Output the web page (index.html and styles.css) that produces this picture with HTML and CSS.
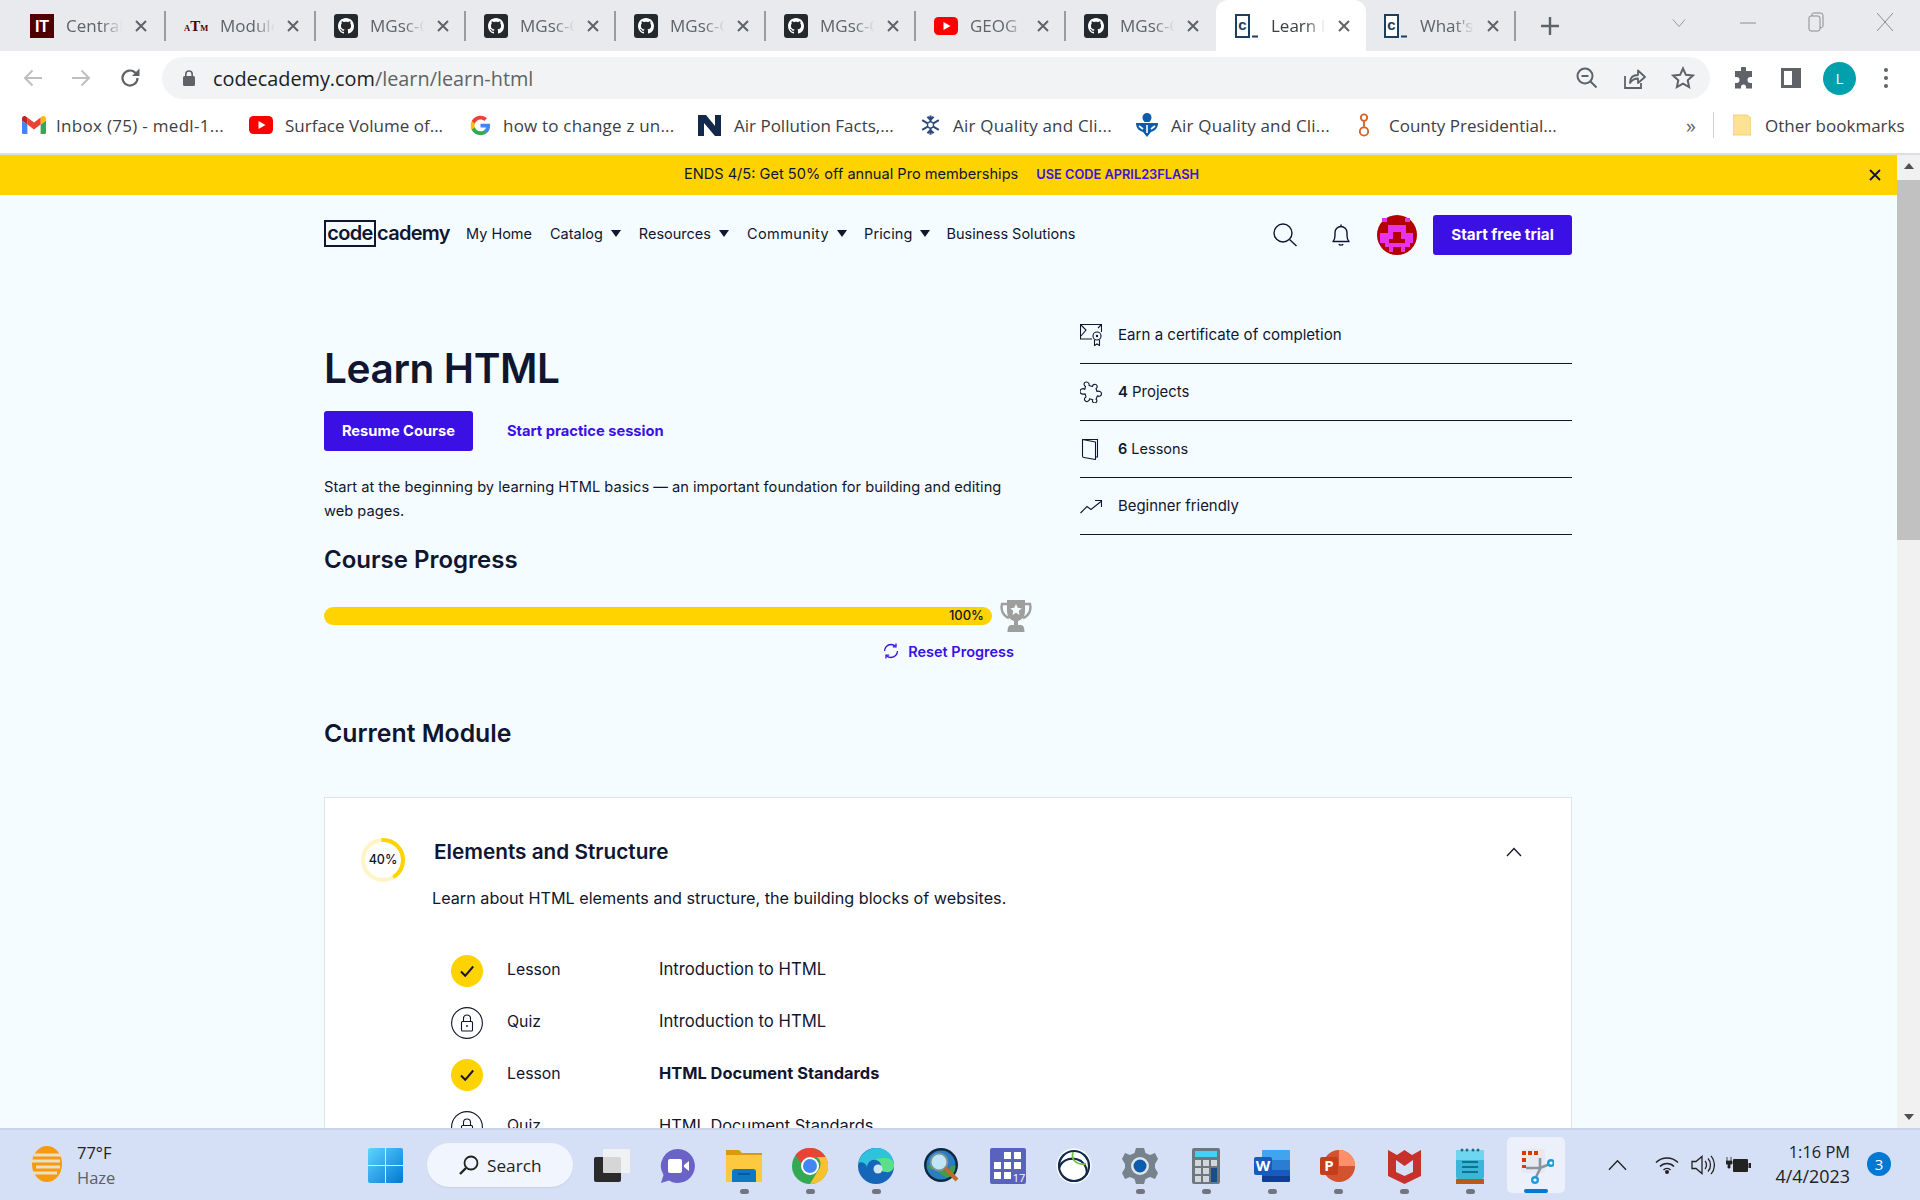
FILE: index.html
```html
<!DOCTYPE html>
<html lang="en">
<head>
<meta charset="utf-8">
<title>Learn HTML | Codecademy</title>
<link rel="stylesheet" href="styles.css">
</head>
<body>
<svg class="defs" width="0" height="0" aria-hidden="true">
  <symbol id="gh" viewBox="0 0 24 24"><rect width="24" height="24" rx="3" fill="#24292e"/><path transform="translate(4 4)" fill="#fff" d="M8 0C3.58 0 0 3.58 0 8c0 3.54 2.29 6.53 5.47 7.59.4.07.55-.17.55-.38 0-.19-.01-.82-.01-1.49-2.01.37-2.53-.49-2.69-.94-.09-.23-.48-.94-.82-1.13-.28-.15-.68-.52-.01-.53.63-.01 1.08.58 1.23.82.72 1.21 1.87.87 2.33.66.07-.52.28-.87.51-1.07-1.78-.2-3.64-.89-3.64-3.95 0-.87.31-1.59.82-2.15-.08-.2-.36-1.02.08-2.12 0 0 .67-.21 2.2.82.64-.18 1.32-.27 2-.27s1.36.09 2 .27c1.53-1.04 2.2-.82 2.2-.82.44 1.1.16 1.92.08 2.12.51.56.82 1.27.82 2.15 0 3.07-1.87 3.75-3.65 3.95.29.25.54.73.54 1.48 0 1.07-.01 1.93-.01 2.2 0 .21.15.46.55.38A8.013 8.013 0 0016 8c0-4.42-3.58-8-8-8z"/></symbol>
  <symbol id="yt" viewBox="0 0 24 24"><rect y="3" width="24" height="18" rx="4.5" fill="#f00"/><path d="M9.5 8v8l7-4z" fill="#fff"/></symbol>
  <symbol id="x" viewBox="0 0 14 14"><path d="M2 2l10 10M12 2L2 12" stroke="#5f6368" stroke-width="2" fill="none"/></symbol>
  <symbol id="check" viewBox="0 0 32 32"><circle cx="16" cy="16" r="16" fill="#ffd300"/><path d="M10 16.5l4.2 4.3 8-9.3" fill="none" stroke="#10162f" stroke-width="2"/></symbol>
  <symbol id="lock" viewBox="0 0 32 32"><circle cx="16" cy="16" r="15.4" fill="#fff" stroke="#10162f" stroke-width="1.1"/><rect x="10.5" y="14.5" width="11" height="9.5" rx="1" fill="none" stroke="#10162f" stroke-width="1.1"/><path d="M12.5 14.5v-3a3.5 3.5 0 017 0v3" fill="none" stroke="#10162f" stroke-width="1.1"/><circle cx="16" cy="19" r=".9" fill="#10162f"/></symbol>
</svg>

<header class="tabstrip">
  <div class="tab tab-first">
    <svg class="fav" viewBox="0 0 24 24"><rect width="24" height="24" fill="#500000"/><text x="12" y="18" text-anchor="middle" class="fav-it">IT</text></svg>
    <span class="tab-title">Central</span><svg class="tab-x"><use href="#x"/></svg>
  </div>
  <div class="tab">
    <svg class="fav" viewBox="0 0 24 24"><text x="0" y="17" class="fav-am">A<tspan class="fav-t">T</tspan><tspan>M</tspan></text></svg>
    <span class="tab-title">Module</span><svg class="tab-x"><use href="#x"/></svg>
  </div>
  <div class="tab"><svg class="fav"><use href="#gh"/></svg><span class="tab-title">MGsc-G</span><svg class="tab-x"><use href="#x"/></svg></div>
  <div class="tab"><svg class="fav"><use href="#gh"/></svg><span class="tab-title">MGsc-G</span><svg class="tab-x"><use href="#x"/></svg></div>
  <div class="tab"><svg class="fav"><use href="#gh"/></svg><span class="tab-title">MGsc-G</span><svg class="tab-x"><use href="#x"/></svg></div>
  <div class="tab"><svg class="fav"><use href="#gh"/></svg><span class="tab-title">MGsc-G</span><svg class="tab-x"><use href="#x"/></svg></div>
  <div class="tab"><svg class="fav"><use href="#yt"/></svg><span class="tab-title">GEOG 3</span><svg class="tab-x"><use href="#x"/></svg></div>
  <div class="tab tab-before-active"><svg class="fav"><use href="#gh"/></svg><span class="tab-title">MGsc-G</span><svg class="tab-x"><use href="#x"/></svg></div>
  <div class="tab tab-active">
    <svg class="fav" viewBox="0 0 24 24"><rect x="1" y="1" width="13" height="22" fill="#fff" stroke="#1d3f5e" stroke-width="2"/><text x="7.500" y="16" text-anchor="middle" class="fav-c">c</text><rect x="17" y="21.500" width="6" height="2" fill="#1d3f5e"/></svg>
    <span class="tab-title">Learn H</span><svg class="tab-x"><use href="#x"/></svg>
  </div>
  <div class="tab">
    <svg class="fav" viewBox="0 0 24 24"><rect x="1" y="1" width="13" height="22" fill="#fff" stroke="#1d3f5e" stroke-width="2"/><text x="7.500" y="16" text-anchor="middle" class="fav-c">c</text><rect x="17" y="21.500" width="6" height="2" fill="#1d3f5e"/></svg>
    <span class="tab-title">What's</span><svg class="tab-x"><use href="#x"/></svg>
  </div>
  <svg class="tab-plus" viewBox="0 0 20 20"><path d="M10 1v18M1 10h18" stroke="#5f6368" stroke-width="2.4"/></svg>
  <div class="winctl">
    <svg class="win-chev" viewBox="0 0 16 10"><path d="M1 1l7 8 7-8" fill="none" stroke="#8a8d91" stroke-width="1"/></svg>
    <svg class="win-min" viewBox="0 0 16 16"><path d="M0 8h16" stroke="#8a8d91" stroke-width="1"/></svg>
    <svg class="win-max" viewBox="0 0 16 20"><rect x="1" y="4" width="11" height="15" rx="2" fill="none" stroke="#8a8d91"/><path d="M4 4V2.5A1.5 1.5 0 015.500 1h7A2.500 2.500 0 0115 3.500V14a2 2 0 01-3 1.500" fill="none" stroke="#8a8d91"/></svg>
    <svg class="win-x" viewBox="0 0 16 20"><path d="M0 1l16 18M16 1L0 19" stroke="#8a8d91" stroke-width="1"/></svg>
  </div>
</header>

<div class="toolbar">
  <svg class="tool tool-back" viewBox="0 0 20 20"><path d="M19 10H2M9.500 2.500L2 10l7.500 7.500" fill="none" stroke="#bcbfc3" stroke-width="2"/></svg>
  <svg class="tool tool-fwd" viewBox="0 0 20 20"><path d="M1 10h17M10.500 2.500L18 10l-7.500 7.500" fill="none" stroke="#bcbfc3" stroke-width="2"/></svg>
  <svg class="tool tool-reload" viewBox="0 0 22 22"><path d="M18.500 11a7.500 7.500 0 11-2.300-5.400L19 8" fill="none" stroke="#5f6368" stroke-width="2.200"/><path d="M20.500 1.500V9h-7.500z" fill="#5f6368"/></svg>
  <div class="omnibox">
    <svg class="lock" viewBox="0 0 12 16"><rect y="6" width="12" height="10" rx="1.500" fill="#5f6368"/><path d="M2.800 6.500V4.200a3.200 3.200 0 016.400 0v2.300" fill="none" stroke="#5f6368" stroke-width="1.600"/></svg>
    <span class="url"><span class="url-host">codecademy.com</span>/learn/learn-html</span>
    <svg class="omni-zoom" viewBox="0 0 22 22"><circle cx="9" cy="9" r="7.500" fill="none" stroke="#5f6368" stroke-width="2"/><path d="M5.500 9h7M14.500 14.500l6 6" stroke="#5f6368" stroke-width="2"/></svg>
    <svg class="omni-share" viewBox="0 0 22 22"><path d="M1 9v12h16v-5" fill="none" stroke="#5f6368" stroke-width="1.800"/><path d="M6 16c0-5 3-8 8-8V3.500l7 6.500-7 6v-4.500c-4 0-6 1.500-8 4.500z" fill="none" stroke="#5f6368" stroke-width="1.800" stroke-linejoin="round"/></svg>
    <svg class="omni-star" viewBox="0 0 24 24"><path d="M12 2.500l2.900 6.300 6.900.8-5.100 4.700 1.400 6.800-6.100-3.400-6.100 3.400 1.400-6.800-5.100-4.700 6.900-.8z" fill="none" stroke="#5f6368" stroke-width="2"/></svg>
  </div>
  <svg class="tool tool-ext" viewBox="0 0 22 22"><path d="M8 1.500a2.500 2.500 0 015 0V4h6v6h-1.500a3 3 0 000 6H19v5.500h-6V20a2.500 2.500 0 00-5 0v1.500H2V16h1.500a3 3 0 000-6H2V4h6z" fill="#5f6368"/></svg>
  <svg class="tool tool-side" viewBox="0 0 20 20"><rect x="1.500" y="1.500" width="17" height="17" fill="none" stroke="#5f6368" stroke-width="3"/><rect x="11" y="1" width="8" height="18" fill="#5f6368"/></svg>
  <div class="profile">L</div>
  <div class="kebab"><i></i><i></i><i></i></div>
</div>

<nav class="bookmarks">
  <div class="bm bm-1"><svg class="bm-ico" viewBox="0 0 24 18"><path d="M1.600 18h3.800V8.500L0 4.500v11.900c0 .9.700 1.600 1.600 1.600z" fill="#4285f4"/><path d="M18.600 18h3.800c.9 0 1.600-.7 1.600-1.600V4.500l-5.400 4z" fill="#34a853"/><path d="M18.600 1.500v7L24 4.500V2.400C24 .4 21.700-.7 20.200.5z" fill="#fbbc04"/><path d="M5.400 8.500v-7L12 6.500l6.600-5v7L12 13.500z" fill="#ea4335"/><path d="M0 2.400v2.100l5.400 4v-7L3.800.5C2.300-.7 0 .4 0 2.400z" fill="#c5221f"/></svg><span>Inbox (75) - medl-1...</span></div>
  <div class="bm bm-2"><svg class="bm-ico"><use href="#yt"/></svg><span>Surface Volume of...</span></div>
  <div class="bm bm-3"><svg class="bm-ico bm-ico-g" viewBox="0 0 24 24"><path d="M23 12.300c0-.9-.1-1.600-.2-2.300H12v4.300h6.200c-.3 1.400-1 2.500-2.200 3.300v2.800h3.600c2.100-2 3.400-4.800 3.400-8.100z" fill="#4285f4"/><path d="M12 23c3 0 5.500-1 7.400-2.700L16 17.600c-1 .7-2.300 1.100-4 1.100-3 0-5.500-2-6.400-4.700H1.900v2.900C3.800 20.600 7.600 23 12 23z" fill="#34a853"/><path d="M5.600 14c-.2-.7-.4-1.400-.4-2.100s.1-1.400.4-2.100V7H1.900C1.200 8.400.8 10.100.8 11.900s.4 3.400 1.100 5z" fill="#fbbc04"/><path d="M12 5.200c1.600 0 3.100.6 4.200 1.700l3.200-3.200C17.500 1.900 15 .8 12 .8 7.600.8 3.800 3.300 1.900 7l3.700 2.800C6.500 7.200 9 5.200 12 5.200z" fill="#ea4335"/></svg><span>how to change z un...</span></div>
  <div class="bm bm-4"><svg class="bm-ico" viewBox="0 0 24 24"><path d="M0 2h8l9 11V2h6v21h-6L6 10v13H0z" fill="#13294b"/></svg><span>Air Pollution Facts,...</span></div>
  <div class="bm bm-5"><svg class="bm-ico bm-ico-snow" viewBox="0 0 24 24"><g stroke="#2c4a7c" stroke-width="2.400" fill="none"><path d="M12 1v22M2.500 6.500l19 11M21.500 6.500l-19 11M8.500 2.500L12 6l3.500-3.500M8.500 21.500L12 18l3.500 3.500"/></g><circle cx="12" cy="12" r="3.500" fill="#fff" stroke="#2c4a7c" stroke-width="1.500"/></svg><span>Air Quality and Cli...</span></div>
  <div class="bm bm-6"><svg class="bm-ico" viewBox="0 0 24 24"><path d="M12 0a4.500 4.500 0 014.500 4.500c0 2-1.500 3.500-2 4.500H9.500c-.5-1-2-2.500-2-4.500A4.500 4.500 0 0112 0z" fill="#0b5cab"/><path d="M1 10h22c0 6-4 8-7 9l-4 5-4-5c-3-1-7-3-7-9z" fill="#0b5cab"/><path d="M4 13l4 3M20 13l-4 3M12 12v8" stroke="#fff" stroke-width="1.600"/></svg><span>Air Quality and Cli...</span></div>
  <div class="bm bm-7"><svg class="bm-ico bm-ico-narrow" viewBox="0 0 12 26"><g fill="none" stroke="#d2622a" stroke-width="2"><circle cx="6" cy="5" r="3.500"/><circle cx="6" cy="20" r="4.500"/><path d="M6 9v6"/></g></svg><span>County Presidential...</span></div>
  <span class="bm-more">»</span>
  <div class="bm-sep"></div>
  <div class="bm bm-other"><svg class="bm-folder" viewBox="0 0 18 22"><path d="M0 1h14l4 3v17H0z" fill="#fde293" stroke="#f4d272" stroke-width="1"/></svg><span>Other bookmarks</span></div>
</nav>

<div class="viewport">
  <div class="page">
    <div class="banner">
      <p class="banner-text">ENDS 4/5: Get 50% off annual Pro memberships<a class="banner-code">USE CODE APRIL23FLASH</a></p>
      <svg class="banner-x" viewBox="0 0 12 12"><path d="M1 1l10 10M11 1L1 11" stroke="#10162f" stroke-width="1.800"/></svg>
    </div>
    <div class="wrap">
      <div class="nav">
        <div class="logo"><span class="logo-box">code</span><span class="logo-rest">cademy</span></div>
        <ul class="nav-links">
          <li>My Home</li>
          <li>Catalog<i class="caret"></i></li>
          <li>Resources<i class="caret"></i></li>
          <li class="nl-community">Community<i class="caret"></i></li>
          <li class="nl-pricing">Pricing<i class="caret"></i></li>
          <li>Business Solutions</li>
        </ul>
        <svg class="nav-search" viewBox="0 0 24 24"><circle cx="10" cy="10" r="9" fill="none" stroke="#10162f" stroke-width="1.400"/><path d="M16.500 16.500l7 6.500" stroke="#10162f" stroke-width="1.400"/></svg>
        <svg class="nav-bell" viewBox="0 0 18 22"><path d="M1 17.500c1.500-1.500 2-3 2-6V8.500a6 6 0 0112 0v3c0 3 .5 4.500 2 6z" fill="none" stroke="#10162f" stroke-width="1.400" stroke-linejoin="round"/><path d="M7 20c.5 1.500 3.500 1.500 4 0" fill="none" stroke="#10162f" stroke-width="1.400"/><path d="M9 .5v2" stroke="#10162f" stroke-width="1.400"/></svg>
        <svg class="nav-avatar" viewBox="0 0 40 40"><circle cx="20" cy="20" r="20" fill="#b30000"/><path d="M5 3h5v4H5zM28 3h5v4h-5zM11 10h18v8h7v10h-3v4h-5v5H12v-5H8v-4H3V18h8z" fill="#e633ee"/><path d="M16 17h8v7h4v4H12v-4h4zM16 32h8v6h-8z" fill="#b30000"/></svg>
        <a class="btn btn-trial">Start free trial</a>
      </div>
      <div class="hero">
        <section class="hero-main">
          <h1>Learn HTML</h1>
          <div class="cta"><a class="btn btn-resume">Resume Course</a><a class="link-practice">Start practice session</a></div>
          <p class="intro">Start at the beginning by learning HTML basics — an important foundation for building and editing web pages.</p>
          <h2 class="progress-title">Course Progress</h2>
          <div class="progress-row">
            <div class="bar"><span class="bar-label">100%</span></div>
            <svg class="trophy" viewBox="0 0 32 32"><path d="M7 0h18v11c0 6-3.500 9-7 10v4h3c2 0 3.500 2 3.500 7h-17c0-5 1.500-7 3.500-7h3v-4c-3.500-1-7-4-7-10z" fill="#9e9e9e"/><path d="M7 4H2c-1.500 6 1 12 7 14M25 4h5c1.500 6-1 12-7 14" fill="none" stroke="#9e9e9e" stroke-width="2.400"/><path d="M16 4l1.700 3.800 4.100.4-3.100 2.700.9 4-3.600-2.100-3.600 2.100.9-4-3.100-2.700 4.100-.4z" fill="#f5fcff"/></svg>
          </div>
          <a class="reset"><svg class="reset-ico" viewBox="0 0 16 16"><path d="M14.500 8c0 3.500-2.800 6.500-6.500 6.500-1.800 0-3.300-.7-4.500-1.800M1.500 8C1.500 4.500 4.300 1.500 8 1.500c1.800 0 3.300.7 4.500 1.800" fill="none" stroke="#3a10e5" stroke-width="1.300"/><path d="M13 .5v3.300H9.800M3 15.500v-3.300h3.200" fill="none" stroke="#3a10e5" stroke-width="1.300"/></svg>Reset Progress</a>
          <h2 class="module-title">Current Module</h2>
        </section>
        <ul class="facts">
          <li class="fact-cert"><svg class="fact-ico" viewBox="0 0 22 22"><path d="M12 15H.5V.500h21V8" fill="none" stroke="#10162f" stroke-width="1.100"/><path d="M1 1l5 5-5 6M21 1l-3 3" fill="none" stroke="#10162f" stroke-width="1.100"/><circle cx="17" cy="12" r="4" fill="#f5fcff" stroke="#10162f" stroke-width="1.100"/><circle cx="17" cy="12" r="1.200" fill="#10162f"/><path d="M14.500 16v5.500l2.500-1.500 2.500 1.500V16" fill="none" stroke="#10162f" stroke-width="1.100"/></svg><span>Earn a certificate of completion</span></li>
          <li><svg class="fact-ico" viewBox="0 0 22 22"><path d="M5.500 5.500C3 4 4 .8 6.500 1c2 .2 3 2 2.500 3.500l3.500 1c0-2.500 3.500-3 4.500-.8.500 1.300 0 2.300-1 2.800l1 3c2-1 4.500 0 4.500 2.300s-2.500 3.200-4 2l-1.500 3.500c1.500.8 1 3.700-1.200 3.700-2 0-3-2-2-3.300l-3.300-1c.200 2.500-3 3.800-4.500 2-1.200-1.500-.2-3.300 1-3.800l-1-3.200c-2 1-5 .2-5-2.300 0-2.500 3-3.500 4.800-2z" fill="none" stroke="#10162f" stroke-width="1.100" stroke-linejoin="round"/></svg><span><b>4</b> Projects</span></li>
          <li class="fact-lessons"><svg class="fact-ico" viewBox="0 0 22 22"><path d="M2.500 1.500h15v17.500h-2" fill="none" stroke="#10162f" stroke-width="1.100"/><path d="M2.500 1.500l13 2.500v17.500l-11.500-2c-1 0-1.500-.6-1.500-1.500z" fill="none" stroke="#10162f" stroke-width="1.100" stroke-linejoin="round"/></svg><span><b>6</b> Lessons</span></li>
          <li><svg class="fact-ico" viewBox="0 0 22 22"><path d="M.5 18l6.500-6.500 4 3L21 6.500M15 5.500h6.500V12" fill="none" stroke="#10162f" stroke-width="1.100"/></svg><span>Beginner friendly</span></li>
        </ul>
      </div>
      <article class="card">
        <div class="card-head">
          <div class="ring">
            <svg viewBox="0 0 44 44"><circle cx="22" cy="22" r="20" fill="none" stroke="#fff4c4" stroke-width="4"/><circle class="ring-val" cx="22" cy="22" r="20" fill="none" stroke="#ffd300" stroke-width="4" stroke-linecap="round" stroke-dasharray="50 126" transform="rotate(-90 22 22)"/></svg>
            <span>40%</span>
          </div>
          <h3>Elements and Structure</h3>
          <svg class="chev" viewBox="0 0 16 10"><path d="M1 9l7-7.500L15 9" fill="none" stroke="#10162f" stroke-width="1.300"/></svg>
        </div>
        <p class="card-desc">Learn about HTML elements and structure, the building blocks of websites.</p>
        <ul class="items">
          <li><svg class="item-ico"><use href="#check"/></svg><span class="item-type">Lesson</span><span class="item-name">Introduction to HTML</span></li>
          <li><svg class="item-ico"><use href="#lock"/></svg><span class="item-type">Quiz</span><span class="item-name">Introduction to HTML</span></li>
          <li><svg class="item-ico"><use href="#check"/></svg><span class="item-type">Lesson</span><b>HTML Document Standards</b></li>
          <li><svg class="item-ico"><use href="#lock"/></svg><span class="item-type">Quiz</span><span class="item-name item-name-alt">HTML Document Standards</span></li>
        </ul>
      </article>
    </div>
  </div>
  <div class="scrollbar">
    <div class="sb-arrow"><i class="sb-up"></i></div>
    <div class="sb-track"><div class="sb-thumb"></div></div>
    <div class="sb-arrow"><i class="sb-down"></i></div>
  </div>
</div>

<footer class="taskbar">
  <div class="weather">
    <svg class="weather-ico" viewBox="0 0 32 36"><ellipse cx="17" cy="18" rx="15" ry="18" fill="#f79a0d"/><path d="M4 9h28M0 15h30M6 21h24M1 27h26" stroke="#eadfc6" stroke-width="3"/></svg>
    <div class="weather-text"><div class="temp">77°F</div><div class="cond">Haze</div></div>
  </div>
  <div class="tb-item"><svg class="tb-ico" viewBox="0 0 36 36"><defs><linearGradient id="winblue" x1="0" y1="0" x2="1" y2="1"><stop offset="0" stop-color="#5fd4ff"/><stop offset="1" stop-color="#0078d4"/></linearGradient></defs><rect width="35" height="35" rx="2" fill="url(#winblue)"/><path d="M17.500 0v35M0 17.500h35" stroke="#e0ebfa" stroke-width="1"/></svg></div>
  <div class="searchbox"><svg class="search-ico" viewBox="0 0 20 20"><circle cx="12" cy="8" r="6.500" fill="none" stroke="#222" stroke-width="1.800"/><path d="M7 13l-6 6" stroke="#222" stroke-width="2.400"/></svg><span>Search</span></div>
  <div class="tb-item"><svg class="tb-ico" viewBox="0 0 36 36"><rect x="0" y="9" width="27" height="25" rx="2" fill="#2a2a2a"/><rect x="9" y="1" width="27" height="24" rx="1" fill="#f4f4f4" fill-opacity=".85"/></svg></div>
  <div class="tb-item"><svg class="tb-ico" viewBox="0 0 36 36"><path d="M18 1a17 17 0 11-9 31.500L1 35l2.500-8A17 17 0 0118 1z" fill="#6b62c8"/><rect x="8" y="11" width="14" height="14" rx="2" fill="#fff"/><path d="M24 17l5-4v10l-5-4z" fill="#fff"/></svg></div>
  <div class="tb-item run"><svg class="tb-ico" viewBox="0 0 36 36"><path d="M0 2h13l3 3h20v29H0z" fill="#fcc93f"/><path d="M0 2h13l3 3h20v2H0z" fill="#d99a0c"/><path d="M6 24c0-2 1-3 3-3h18c2 0 3 1 3 3v10H6z" fill="#0c78c8"/><path d="M12 26h12" stroke="#084f88" stroke-width="1.500"/></svg></div>
  <div class="tb-item run"><svg class="tb-ico" viewBox="0 0 36 36"><circle cx="18" cy="18" r="18" fill="#34a853"/><path d="M18 0a18 18 0 0115.600 9H18a9 9 0 00-8.600 6.300L3.500 7A18 18 0 0118 0z" fill="#ea4335"/><path d="M33.600 9A18 18 0 0118 36l8-13.500A9 9 0 0025 9z" fill="#fbc02d"/><circle cx="18" cy="18" r="9" fill="#fff"/><circle cx="18" cy="18" r="7" fill="#4285f4"/></svg></div>
  <div class="tb-item run"><svg class="tb-ico" viewBox="0 0 36 36"><circle cx="18" cy="18" r="18" fill="#1565b8"/><path d="M0 16C2 6 10 0 19 0c9 0 17 7 17 17 0 4-3 8-8 7-5-.5-6-3-6-3 2-3 1-8-4-9-6-1-9 4-9 8 0-4-6-8-9-4z" fill="#2fc2dd"/><path d="M36 17c0 4-3 8-8 7-4-.5-6-2-6-3 3-4 0-10-6-9 10-4 20-2 20 5z" fill="#5be08a"/><circle cx="20" cy="21" r="4.500" fill="#cfe6f2"/></svg></div>
  <div class="tb-item"><svg class="tb-ico" viewBox="0 0 36 36"><circle cx="17" cy="17" r="17" fill="#0f2a3f"/><circle cx="17" cy="17" r="14.500" fill="#2a7dc0"/><path d="M5 20c6-4 10 2 16 6s8-6 8-8" fill="none" stroke="#3e9e4a" stroke-width="5"/><circle cx="15" cy="14" r="8.500" fill="#bfe6f7" stroke="#7d8f98" stroke-width="2"/><path d="M21 20l12 12" stroke="#c06a2b" stroke-width="4"/></svg></div>
  <div class="tb-item"><svg class="tb-ico" viewBox="0 0 36 36"><rect width="36" height="36" rx="2" fill="#5a62bf"/><g fill="#fff"><rect x="14" y="4" width="7" height="7"/><rect x="24" y="4" width="7" height="7"/><rect x="4" y="14" width="7" height="7"/><rect x="14" y="14" width="7" height="7"/><rect x="24" y="14" width="7" height="7"/><rect x="4" y="24" width="7" height="7"/><rect x="14" y="24" width="7" height="7"/></g><text x="29" y="34" text-anchor="middle" class="cal-17">17</text></svg></div>
  <div class="tb-item"><svg class="tb-ico" viewBox="0 0 36 36"><circle cx="18" cy="18" r="17.500" fill="#fff"/><circle cx="18" cy="18" r="15" fill="none" stroke="#13294b" stroke-width="2.200"/><path d="M3 20c3-9 14-12 22-7 5 4 7 10 5 14" fill="none" stroke="#13294b" stroke-width="2.200"/><path d="M17 4c-2 7 2 13 13 12" fill="none" stroke="#6fbe44" stroke-width="1.800"/></svg></div>
  <div class="tb-item run"><svg class="tb-ico" viewBox="0 0 36 36"><path d="M14 0h8l1.500 5 4.500 2 5-2 3 6-3 5v4l3 5-3 6-5-2-4.500 2L22 36h-8l-1.500-5-4.500-2-5 2-3-6 3-5v-4l-3-5 3-6 5 2 4.500-2z" fill="#76828c"/><circle cx="18" cy="18" r="9" fill="#dfe5ea"/><circle cx="18" cy="18" r="6.500" fill="#0e5cad"/></svg></div>
  <div class="tb-item run"><svg class="tb-ico tb-ico-calc" viewBox="0 0 28 36"><rect width="28" height="36" rx="2" fill="#6d7780"/><rect x="3" y="3" width="22" height="6" fill="#40d2f0"/><g fill="#d3d7db"><rect x="3" y="12" width="6" height="6"/><rect x="11" y="12" width="6" height="6"/><rect x="19" y="12" width="6" height="6"/><rect x="3" y="20" width="6" height="6"/><rect x="11" y="20" width="6" height="6"/><rect x="3" y="28" width="6" height="6"/><rect x="11" y="28" width="6" height="6"/></g><rect x="19" y="20" width="6" height="14" fill="#14508c"/></svg></div>
  <div class="tb-item run"><svg class="tb-ico" viewBox="0 0 36 36"><rect x="8" y="2" width="28" height="11" rx="1" fill="#41a5ee"/><rect x="8" y="12" width="28" height="11" fill="#2b7cd3"/><rect x="8" y="22" width="28" height="8" fill="#185abd"/><rect x="8" y="28" width="28" height="6" rx="1" fill="#103f91"/><rect y="9" width="18" height="18" rx="2" fill="#185abd"/><text x="9" y="23" text-anchor="middle" class="office-l">W</text></svg></div>
  <div class="tb-item run"><svg class="tb-ico" viewBox="0 0 36 36"><circle cx="19" cy="18" r="16" fill="#d35230"/><path d="M19 2a16 16 0 0116 16H19z" fill="#ff8f6b"/><rect y="9" width="18" height="18" rx="2" fill="#c43e1c"/><text x="9" y="23" text-anchor="middle" class="office-l">P</text></svg></div>
  <div class="tb-item run"><svg class="tb-ico tb-ico-mc" viewBox="0 0 33 36"><path d="M0 2l9 5 7.500-5L24 7l9-5v26l-16.500 8L0 28z" fill="#c8302c"/><path d="M8 12v12l8.500 4 8.500-4V12l-8.500 6z" fill="#d5dff5"/></svg></div>
  <div class="tb-item run"><svg class="tb-ico tb-ico-note" viewBox="0 0 28 36"><rect y="2" width="28" height="29" rx="2" fill="#3cb6d8"/><path d="M0 2h28v10H0z" fill="#6fd6ef"/><rect y="31" width="28" height="5" fill="#b9591a"/><path d="M6 14h16M6 19h16M6 24h16" stroke="#0e7390" stroke-width="2"/><g fill="#1a6e88"><circle cx="6" cy="2" r="1.500"/><circle cx="11" cy="2" r="1.500"/><circle cx="17" cy="2" r="1.500"/><circle cx="22" cy="2" r="1.500"/></g></svg></div>
  <div class="tb-item tb-active"><svg class="tb-ico" viewBox="0 0 36 36"><rect x="3" y="1" width="24" height="24" rx="3" fill="#e6e9ef"/><g fill="#d83b01"><rect x="4" y="3" width="4" height="4"/><rect x="10" y="3" width="4" height="4"/><rect x="16" y="3" width="4" height="4"/><rect x="4" y="10" width="4" height="4"/><rect x="4" y="17" width="4" height="3"/></g><path d="M8 20h14l10-4M22 10v11l-4 8" stroke="#8b939c" stroke-width="2.600" fill="none"/><circle cx="33" cy="15" r="2.800" fill="#fff" stroke="#1e9be0" stroke-width="2.400"/><circle cx="17" cy="32" r="2.800" fill="#fff" stroke="#1e9be0" stroke-width="2.400"/></svg><i class="tb-bar"></i></div>
  <div class="tray">
    <svg class="tray-chev" viewBox="0 0 20 12"><path d="M1 11l9-9.500 9 9.500" fill="none" stroke="#222" stroke-width="1.400"/></svg>
    <svg class="tray-wifi" viewBox="0 0 24 18"><path d="M1 6.500c6-6 16-6 22 0M5 10.500c4-4 10-4 14 0M8.500 14c2-2 5-2 7 0" fill="none" stroke="#222" stroke-width="1.500"/><circle cx="12" cy="16" r="2" fill="#222"/></svg>
    <svg class="tray-vol" viewBox="0 0 24 22"><path d="M1 7.500h4L11 2.500v17l-6-5H1z" fill="none" stroke="#222" stroke-width="1.300"/><path d="M14 7c2 2 2 6 0 8M17 4.500c3.300 3.500 3.300 9.500 0 13M20 2c4.500 5 4.500 13 0 18" fill="none" stroke="#222" stroke-width="1.300"/></svg>
    <svg class="tray-bat" viewBox="0 0 25 18"><path d="M1 1v4M5 1v4M0 5h6v3H4v4H2V8H0z" stroke="#222" fill="#222" stroke-width=".8"/><rect x="7" y="3" width="15" height="13" rx="1" fill="#222"/><rect x="22.500" y="7" width="2.500" height="5" fill="#222"/></svg>
    <div class="clock"><div class="clock-time">1:16 PM</div><div class="clock-date">4/4/2023</div></div>
    <div class="notif">3</div>
  </div>
</footer>
</body>
</html>
```

FILE: styles.css
```css
* { box-sizing: border-box; }
html, body { margin: 0; padding: 0; }
body {
  width: 1920px;
  height: 1200px;
  overflow: hidden;
  display: flex;
  flex-direction: column;
  font-family: "Inter", "Liberation Sans", sans-serif;
  color: #10162f;
  background: #fff;
}
.defs { display: block; height: 0; }
ul { list-style: none; margin: 0; padding: 0; }
h1, h2, h3, p { margin: 0; }
svg { display: block; flex: none; }

/* ---------- Browser chrome ---------- */
.tabstrip {
  height: 51px;
  flex: none;
  display: flex;
  align-items: stretch;
  padding-left: 12px;
  background: #e8eaed;
  font-family: "Open Sans", "Liberation Sans", sans-serif;
}
.tab {
  position: relative;
  width: 150px;
  display: flex;
  align-items: center;
  padding-left: 18px;
}
.tab-first { width: 154px; }
.tab::after {
  content: "";
  position: absolute;
  right: 0;
  top: 11px;
  bottom: 10px;
  width: 2px;
  background: #9a9ca0;
}
.tab-before-active::after, .tab-active::after { display: none; }
.tab-active {
  background: #fff;
  border-radius: 12px 12px 0 0;
  padding-left: 19px;
}
.fav { width: 24px; height: 24px; }
.fav-it { font: 700 16px "Liberation Sans", sans-serif; fill: #fff; }
.fav-am { font: 700 8.500px "Liberation Serif", serif; fill: #500000; }
.fav-t { font-size: 15px; }
.fav-c { font: 700 15px "Liberation Mono", monospace; fill: #1d3f5e; }
.tab-title {
  margin-left: 12px;
  width: 62px;
  margin-right: 4px;
  flex: none;
  overflow: hidden;
  white-space: nowrap;
  font-size: 17px;
  color: #5f6368;
  -webkit-mask-image: linear-gradient(90deg, #000 55%, transparent 88%);
  mask-image: linear-gradient(90deg, #000 55%, transparent 88%);
}
.tab-first .tab-title { width: 64px; }
.tab-active .tab-title { color: #3c4043; }
.tab-x { width: 14px; height: 14px; }
.tab-plus { width: 20px; height: 20px; margin: 16px 0 0 24px; }
.winctl { margin-left: auto; display: flex; align-items: flex-start; padding-right: 27px; }
.win-chev { width: 14px; height: 10px; margin-top: 18px; margin-right: 54px; }
.win-min { width: 16px; height: 16px; margin-top: 15px; margin-right: 52px; }
.win-max { width: 16px; height: 20px; margin-top: 12px; margin-right: 53px; }
.win-x { width: 16px; height: 20px; margin-top: 12px; }

.toolbar {
  height: 52px;
  flex: none;
  display: flex;
  align-items: center;
  background: #fff;
  padding-top: 2px;
}
.tool { width: 20px; height: 20px; }
.tool-back { margin-left: 23px; }
.tool-fwd { margin-left: 28px; }
.tool-reload { width: 22px; height: 22px; margin-left: 28px; }
.omnibox {
  width: 1548px;
  height: 42px;
  margin-left: 21px;
  border-radius: 21px;
  background: #f1f3f4;
  display: flex;
  align-items: center;
  padding-left: 21px;
}
.lock { width: 12px; height: 16px; }
.url {
  margin-left: 18px;
  font-family: "Open Sans", "Liberation Sans", sans-serif;
  font-size: 19.850px;
  color: #5f6368;
  white-space: nowrap;
}
.url-host { color: #202124; }
.omni-zoom { width: 22px; height: 22px; margin-left: auto; }
.omni-share { width: 22px; height: 22px; margin-left: 26px; }
.omni-star { width: 24px; height: 24px; margin-left: 25px; margin-right: 15px; }
.tool-ext { width: 22px; height: 22px; margin-left: 23px; }
.tool-side { margin-left: 26px; }
.profile {
  width: 33px;
  height: 33px;
  margin-left: 22px;
  border-radius: 50%;
  background: #00a0ad;
  color: #fff;
  font: 400 15px/33px "Open Sans", sans-serif;
  text-align: center;
}
.kebab { margin-left: 28px; display: flex; flex-direction: column; gap: 4px; }
.kebab i { display: block; width: 4px; height: 4px; border-radius: 50%; background: #5f6368; }

.bookmarks {
  height: 52px;
  flex: none;
  display: flex;
  align-items: center;
  background: #fff;
  border-bottom: 2px solid #dcdee1;
  padding: 0 0 6px 22px;
  font-family: "Open Sans", "Liberation Sans", sans-serif;
  font-size: 17px;
  color: #3c4043;
}
.bm { display: flex; align-items: center; gap: 12px; white-space: nowrap; flex: none; }
.bm-1 { width: 227px; gap: 10px; letter-spacing: .3px; }
.bm-2 { width: 221px; }
.bm-3 { width: 228px; letter-spacing: .2px; }
.bm-4 { width: 222px; }
.bm-5 { width: 215px; letter-spacing: .2px; }
.bm-6 { width: 223px; letter-spacing: .2px; }
.bm-7 { width: 328px; }
.bm-ico { width: 24px; height: 24px; }
.bm-1 .bm-ico { height: 18px; }
.bm-ico-g { width: 21px; height: 21px; }
.bm-ico-snow { width: 21px; }
.bm-ico-narrow { width: 12px; margin-right: 7px; }
.bm-more { font-size: 20px; width: 27px; color: #5f6368; }
.bm-sep { width: 1px; height: 26px; background: #cfd1d4; margin-right: 19px; }
.bm-folder { width: 18px; height: 22px; }
.bm-other { gap: 14px; }

/* ---------- Page ---------- */
.viewport { flex: 1; min-height: 0; display: flex; overflow: hidden; background: #f5fcff; }
.page { flex: 1; min-width: 0; overflow: hidden; }
.banner {
  height: 40px;
  background: #ffd300;
  display: flex;
  align-items: center;
  padding-right: 16px;
}
.banner-text { flex: 1; text-align: center; font-size: 14.600px; padding: 0 0 3px 14px; white-space: nowrap; }
.banner-code { margin-left: 18px; color: #3a10e5; font-weight: 600; font-size: 12.800px; }
.banner-x { width: 12px; height: 12px; }

.wrap { width: 1248px; margin-left: 324px; }
.nav { height: 40px; margin-top: 20px; display: flex; align-items: center; }
.logo { display: flex; align-items: center; width: 142px; margin-bottom: 3px; font-size: 20px; font-weight: 600; letter-spacing: -.7px; }
.logo-box { border: 2.5px solid #10162f; height: 27px; width: 52px; line-height: 22px; text-align: center; }
.logo-rest { margin-left: 1px; line-height: 27px; }
.nav-links { display: flex; margin-bottom: 3px; font-size: 14.500px; gap: 18px; white-space: nowrap; }
.nav-links li { display: flex; align-items: center; }
.nl-community { letter-spacing: .4px; }
.nl-pricing { letter-spacing: .1px; margin-left: -1px; margin-right: -2px; }
.caret {
  width: 0;
  height: 0;
  margin-left: 8px;
  border-left: 5px solid transparent;
  border-right: 5px solid transparent;
  border-top: 7px solid #10162f;
}
.nav-search { width: 24px; height: 24px; margin-left: auto; }
.nav-bell { width: 18px; height: 22px; margin-left: 35px; }
.nav-avatar { width: 40px; height: 40px; margin-left: 27px; }
.btn {
  display: flex;
  align-items: center;
  justify-content: center;
  height: 40px;
  border-radius: 3px;
  background: #3a10e5;
  color: #fff;
  font-size: 14.700px;
  font-weight: 700;
  padding-bottom: 1px;
}
.btn-trial { width: 139px; margin-left: 16px; font-size: 15.200px; }

.hero { display: grid; grid-template-columns: 708px 492px; column-gap: 48px; margin-top: 51px; }
h1 { margin-top: 38px; font-size: 40.600px; line-height: 50px; font-weight: 600; letter-spacing: -.4px; }
.cta { display: flex; align-items: center; margin-top: 17px; }
.btn-resume { width: 149px; }
.link-practice { margin-left: 34px; color: #3a10e5; font-size: 14.700px; font-weight: 700; }
.intro { margin-top: 24px; width: 690px; font-size: 14.660px; line-height: 24px; }
.progress-title { margin-top: 22px; font-size: 24px; line-height: 30px; font-weight: 600; }
.progress-row { display: flex; align-items: center; margin-top: 25px; height: 32px; }
.bar {
  width: 668px;
  height: 18px;
  border-radius: 9px;
  background: #ffd300;
  font-size: 13px;
  font-weight: 500;
  line-height: 16px;
  text-align: right;
  padding-right: 8px;
}
.trophy { width: 32px; height: 32px; margin-left: 8px; }
.reset {
  display: flex;
  align-items: center;
  justify-content: flex-end;
  width: 690px;
  margin-top: 7px;
  height: 24px;
  font-size: 14.500px;
  font-weight: 600;
  color: #3a10e5;
}
.reset-ico { width: 16px; height: 16px; margin-right: 9px; }
.module-title { margin-top: 55px; font-size: 24.800px; line-height: 30px; font-weight: 600; }
.facts { margin-top: 1px; }
.facts li {
  height: 57px;
  display: flex;
  align-items: center;
  border-bottom: 1px solid #10162f;
  font-size: 14.900px;
  padding-bottom: 1px;
}
.facts .fact-cert { font-size: 15.100px; }
.facts .fact-lessons { font-size: 14.500px; }
.facts b { font-weight: 600; }
.fact-ico { width: 22px; height: 22px; margin-right: 16px; }

.card { margin-top: 49px; height: 480px; background: #fff; border: 1px solid #dfe4ec; padding: 40px 0 0 36px; }
.card-head { display: flex; align-items: flex-start; height: 44px; padding-right: 49px; }
.ring { position: relative; width: 44px; height: 44px; }
.ring svg { width: 44px; height: 44px; }
.ring span {
  position: absolute;
  inset: 0;
  text-align: center;
  font-size: 12.500px;
  line-height: 44px;
  font-weight: 500;
}
h3 { margin: -1px 0 0 29px; font-size: 20.750px; line-height: 30px; font-weight: 600; }
.chev { width: 16px; height: 10px; margin-left: auto; margin-top: 9px; }
.card-desc { margin: 4px 0 0 71px; font-size: 16.200px; line-height: 24px; }
.items { margin: 35px 0 0 90px; font-size: 15.800px; }
.items li { display: flex; align-items: center; height: 52px; white-space: nowrap; }
.items li > span, .items li > b { margin-bottom: 4px; }
.items b { font-weight: 700; font-size: 16.400px; }
.item-name { font-size: 16.700px; }
.item-name-alt { font-size: 16.400px; }
.item-ico { width: 32px; height: 32px; margin-right: 24px; }
.item-type { width: 152px; flex: none; }

.scrollbar { width: 23px; flex: none; display: flex; flex-direction: column; background: #f1f1f1; }
.sb-arrow { height: 22px; flex: none; display: flex; align-items: center; justify-content: center; }
.sb-track { flex: 1; padding: 3px 0 0; }
.sb-thumb { height: 360px; background: #c1c1c1; }
.sb-up, .sb-down { width: 0; height: 0; border-left: 5px solid transparent; border-right: 5px solid transparent; }
.sb-up { border-bottom: 6px solid #505050; }
.sb-down { border-top: 6px solid #505050; }

/* ---------- Taskbar ---------- */
.taskbar {
  height: 72px;
  flex: none;
  display: flex;
  align-items: flex-start;
  background: #d5dff5;
  border-top: 2px solid #c9d3ec;
  font-family: "Open Sans", "Liberation Sans", sans-serif;
  color: #222;
}
.weather { width: 353px; flex: none; display: flex; align-items: center; padding: 10px 0 0 30px; }
.weather-ico { width: 32px; height: 36px; margin-top: -2px; }
.weather-text { margin-left: 15px; font-size: 16.500px; line-height: 25px; }
.cond { color: #5b6069; }
.tb-item {
  position: relative;
  width: 66px;
  height: 70px;
  flex: none;
  display: flex;
  flex-direction: column;
  align-items: center;
  padding-top: 18px;
}
.tb-ico { width: 36px; height: 36px; }
.tb-ico-calc, .tb-ico-note { width: 28px; }
.tb-ico-mc { width: 33px; }
.run::after {
  content: "";
  position: absolute;
  top: 59px;
  width: 9px;
  height: 5px;
  border-radius: 3px;
  background: #70757f;
}
.tb-active::before {
  content: "";
  position: absolute;
  top: 7px;
  left: 4px;
  right: 4px;
  height: 56px;
  border-radius: 5px;
  background: #ecf0fa;
}
.tb-active .tb-ico { position: relative; }
.tb-bar {
  position: absolute;
  top: 59px;
  width: 24px;
  height: 4px;
  border-radius: 2px;
  background: #0078d4;
}
.searchbox {
  width: 146px;
  height: 44px;
  margin: 13px 6px 0 8px;
  flex: none;
  border-radius: 22px;
  background: #f1f5fe;
  box-shadow: 0 1px 1px #c5cfe6;
  display: flex;
  align-items: center;
  padding-left: 32px;
  font-size: 17.200px;
}
.search-ico { width: 20px; height: 20px; margin-right: 8px; }
.tray { flex: 1; display: flex; align-items: center; height: 70px; padding-left: 39px; }
.tray-chev { width: 19px; height: 12px; }
.tray-wifi { width: 24px; height: 18px; margin-left: 28px; }
.tray-vol { width: 24px; height: 22px; margin-left: 12px; }
.tray-bat { width: 25px; height: 18px; margin-left: 11px; }
.clock { width: 99px; text-align: right; line-height: 24px; margin-top: -2px; }
.clock-time { font-size: 16.400px; }
.clock-date { font-size: 17.900px; }
.notif {
  width: 24px;
  height: 24px;
  margin-left: 17px;
  margin-top: -2px;
  border-radius: 50%;
  background: #0078d4;
  color: #fff;
  font-size: 15px;
  line-height: 24px;
  text-align: center;
}
.office-l { font: 700 15px "Open Sans", sans-serif; fill: #fff; }
.cal-17 { font: 400 11px "Open Sans", sans-serif; fill: #fff; }
```
